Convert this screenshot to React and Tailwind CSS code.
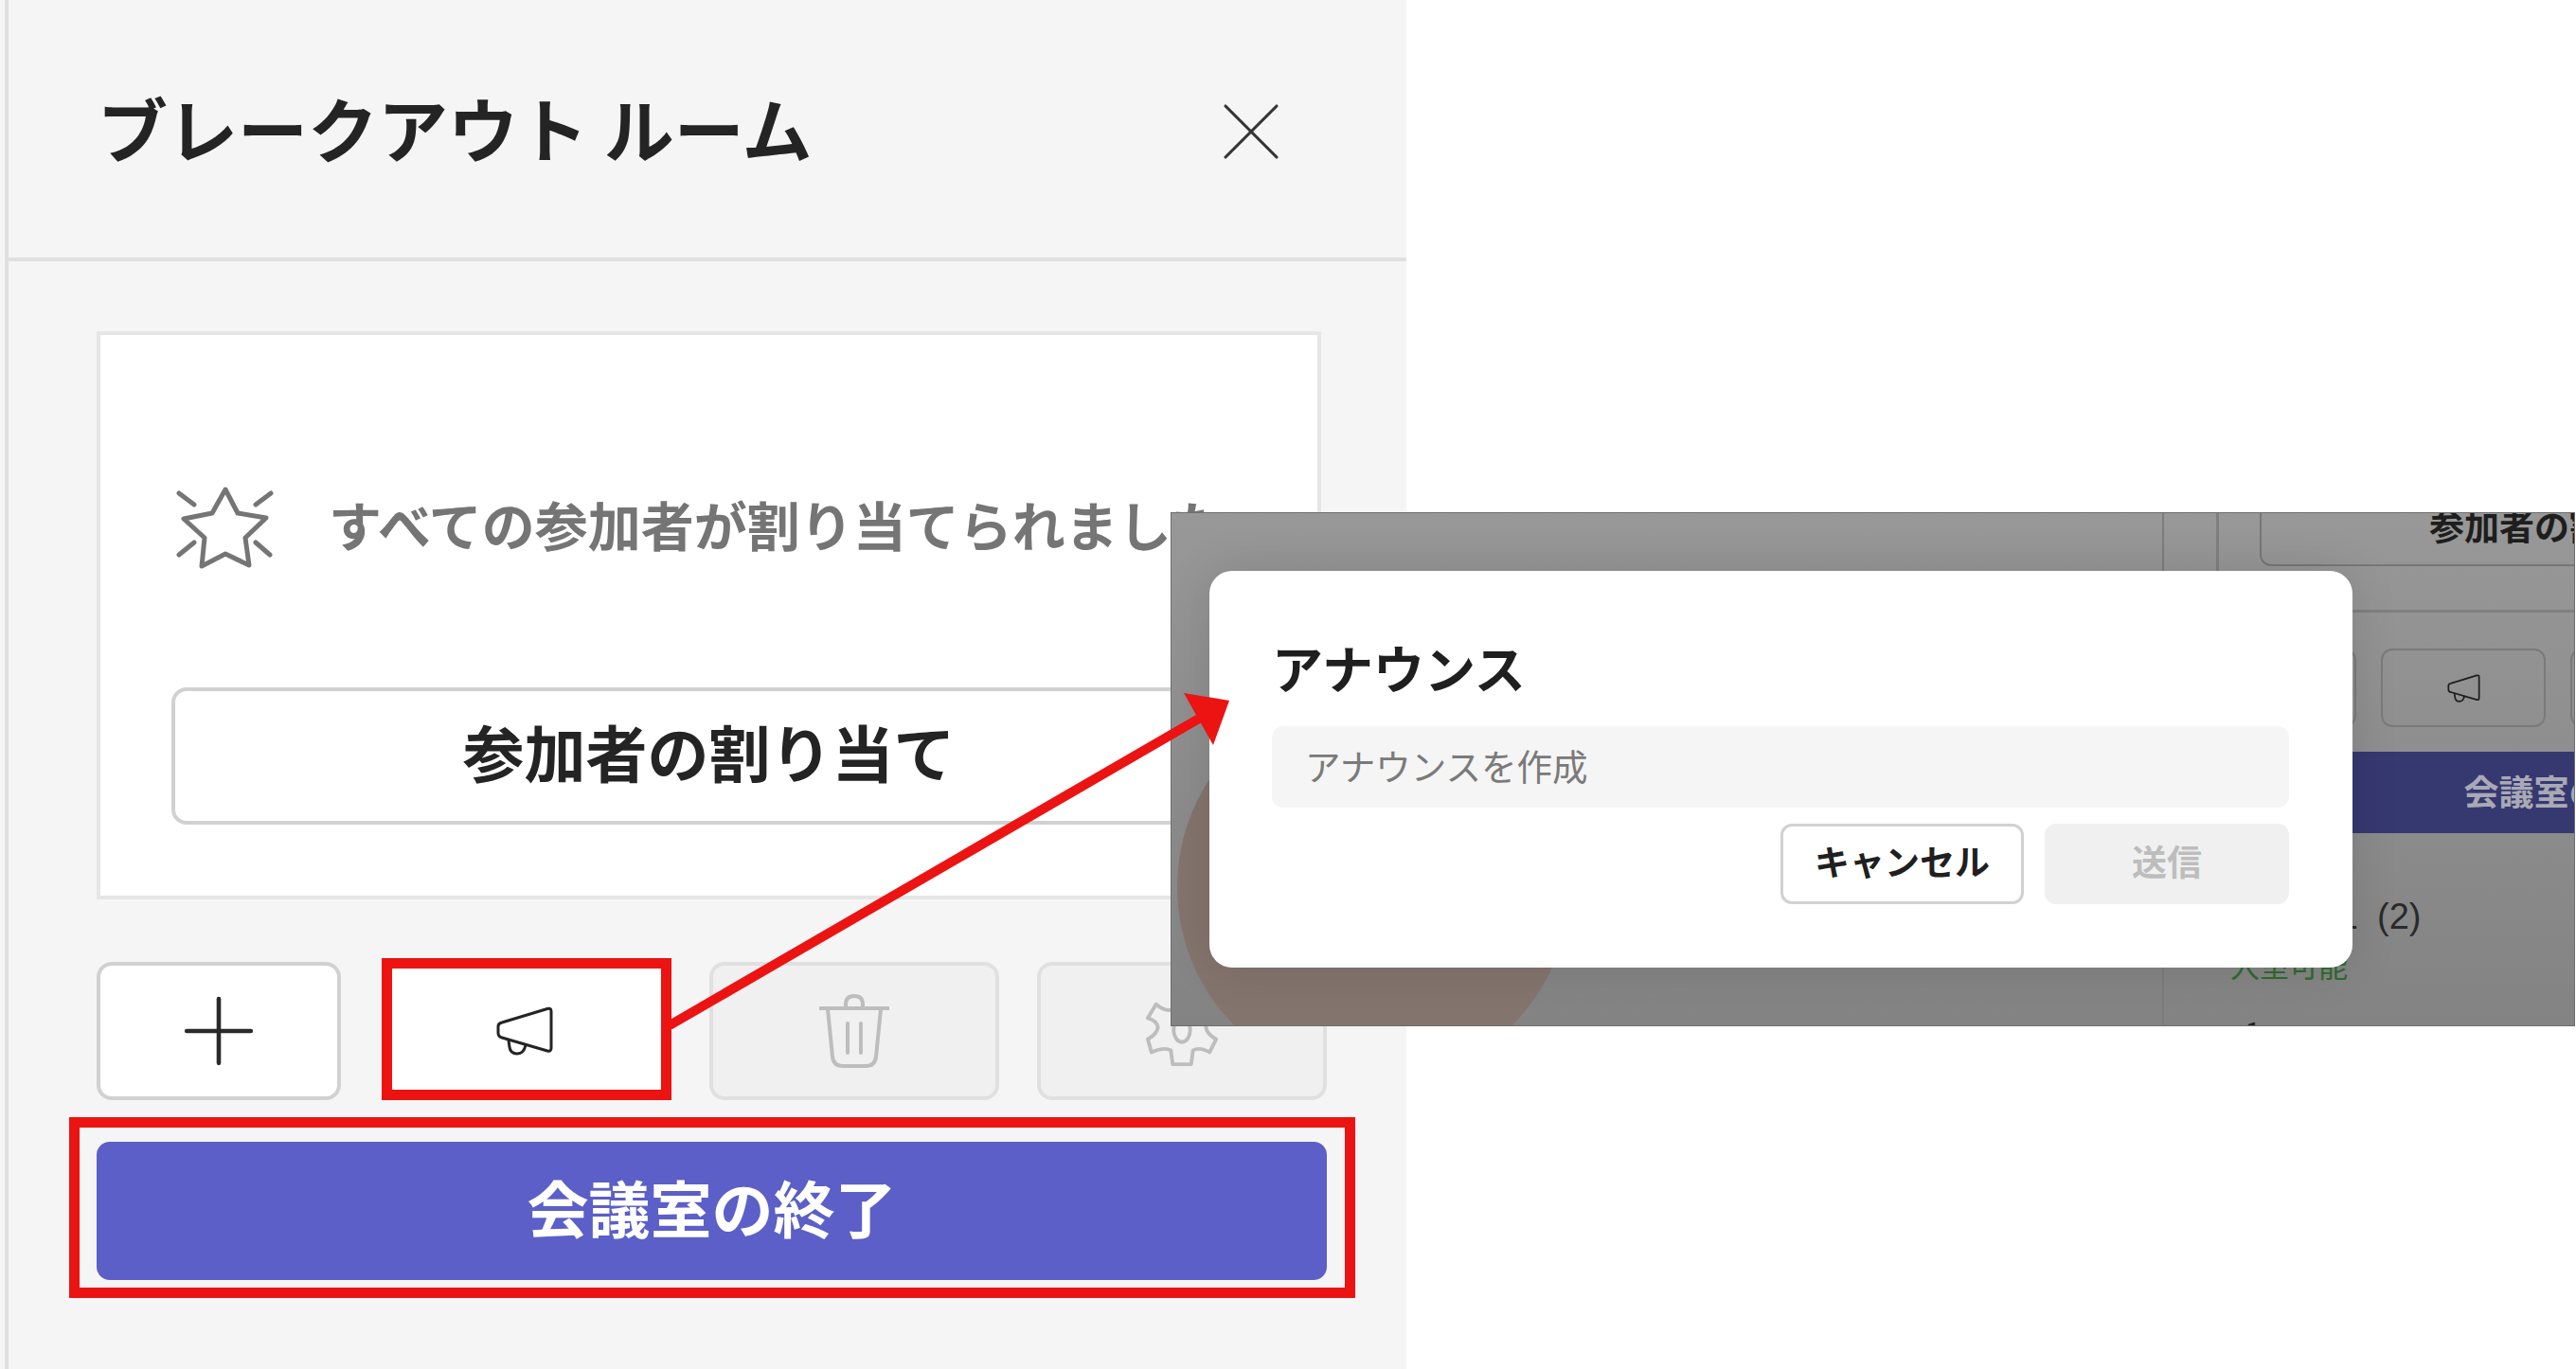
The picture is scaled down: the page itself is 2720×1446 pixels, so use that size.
import { X, Plus } from "lucide-react";

function Megaphone({ className }) {
  return (
    <svg viewBox="0 0 60 52" fill="none" stroke="currentColor" strokeWidth="3" strokeLinejoin="round" strokeLinecap="round" className={className}>
      <path d="M6 17 L54 2.5 Q58 1.5 58 5 L58 44 Q58 48 54 47 L6 33 Q2 32 2 28 L2 21 Q2 18 6 17 Z" />
      <path d="M13 36 L14 43 Q15 50 22 50 Q29 50 31 41" />
    </svg>
  );
}

function Trash({ className }) {
  return (
    <svg viewBox="0 0 74 78" fill="none" stroke="currentColor" strokeWidth="4" strokeLinecap="round" className={className}>
      <path d="M1 15 H73" />
      <path d="M28 14 V11 Q28 2 37 2 Q46 2 46 11 V14" />
      <path d="M9 16 L14 66 Q15 76 25 76 H49 Q59 76 60 66 L65 16" />
      <path d="M30 31 V62 M44 31 V62" />
    </svg>
  );
}

function Gear({ className }) {
  return (
    <svg viewBox="-2 -11 78 80" fill="none" stroke="currentColor" strokeWidth="4" strokeLinejoin="round" className={className}>
      <path d="M9 0 Q18 8 27 6 L27 -9 L47 -9 L47 6 Q56 8 65 0 L74 15 Q64 18 63 25 Q64 32 74 38 L67 52 Q56 46 49 50 L47 65 L27 65 L25 50 Q18 46 4 52 L0 38 Q10 32 11 25 Q10 18 0 15 Z" />
      <ellipse cx="37" cy="28" rx="9" ry="13" />
    </svg>
  );
}

function StarBurst({ className }) {
  return (
    <svg viewBox="20 20 112 95" fill="none" stroke="currentColor" strokeWidth="5" strokeLinecap="round" strokeLinejoin="round" className={className}>
      <path d="M77 27 L90 52 L120 57 L98 78 L102 107 L77 95 L52 108 L55 78 L33 58 L63 52 Z" />
      <path d="M28 31 L44 43 M125 31 L109 43 M28 96 L44 83 M124 96 L109 83" />
    </svg>
  );
}

// the dimmed panel behind the dialog, same structure as the big one at a smaller size
function DimmedPanel() {
  return (
    <div className="ml-[1046px] w-[860px] shrink-0 border-l-2 border-[#7c7c7c] pl-[55px]">
      <div className="w-[745px] h-[145px] -mt-[40px] border-[3px] border-[#7f7f7f] pl-[43px] pt-[17px]">
        <div className="w-[654px] h-[76px] border-2 border-[#777] rounded-[12px] flex items-center justify-center pb-[8px] text-[37px] font-bold text-[#1e1e1e] whitespace-nowrap">参加者の割り当て</div>
      </div>
      <div className="flex gap-[26px] mt-[38px]">
        <div className="w-[148px] h-[83px] border-2 border-[#7a7a7a] rounded-[12px]" />
        <div className="w-[174px] h-[83px] border-2 border-[#7a7a7a] rounded-[12px] flex items-center justify-center text-[#1e1e1e]">
          <Megaphone className="w-[35px] h-[30px]" />
        </div>
        <div className="w-[174px] h-[83px] border-2 border-[#7a7a7a] rounded-[12px]" />
      </div>
      <div className="w-[745px] h-[86px] mt-[26px] bg-[#363870] flex items-center justify-center pb-[2px] text-[37px] font-bold text-[#a9a9b5] whitespace-nowrap">会議室の終了</div>
      <div className="flex gap-[20px] mt-[64px] text-[38px] leading-[48px] text-[#2a2a2a] font-['Liberation_Sans','Noto_Sans_CJK_JP',sans-serif]">
        <span className="w-[150px] text-right whitespace-nowrap">ルーム 1</span>
        <span>(2)</span>
      </div>
      <div className="pl-[15px] mt-[5px] text-[31px] leading-[44px] text-[#2f6b2f] whitespace-nowrap">入室可能</div>
      <div className="pl-[30px] mt-[26px] text-[32px] leading-[44px] text-[#222]">1</div>
    </div>
  );
}

function AnnouncementShot() {
  return (
    <div className="absolute left-[1236px] top-[541px] w-[1483px] h-[543px] border border-[#6e6e6e] bg-gradient-to-b from-[#989898] to-[#838383] overflow-hidden flex">
      <div className="absolute left-[6px] top-[188px] w-[414px] h-[414px] rounded-full bg-[#84746e]" />
      <DimmedPanel />

      <div className="absolute left-[40px] top-[61px] w-[1207px] h-[419px] bg-white rounded-[24px] shadow-[0_0_50px_rgba(0,0,0,0.12)] pl-[66px] pt-[72px]">
        <div className="h-[60px] text-[54px] leading-[60px] font-bold text-[#1f1f1f]">アナウンス</div>
        <input
          readOnly
          placeholder="アナウンスを作成"
          className="block mt-[32px] w-[1074px] h-[86px] rounded-[12px] bg-[#f5f5f5] pl-[35px] pb-[6px] text-[37.5px] outline-none placeholder:text-[#7a7a7a]"
        />
        <div className="flex justify-end gap-[22px] w-[1074px] mt-[17px]">
          <button className="w-[257px] h-[85px] rounded-[12px] border-[3px] border-[#d1d1d1] bg-white pb-[5px] text-[37px] font-bold text-[#1f1f1f]">キャンセル</button>
          <button className="w-[258px] h-[85px] rounded-[12px] bg-[#f0f0f0] pb-[5px] text-[37px] font-bold text-[#bdbdbd]">送信</button>
        </div>
      </div>
    </div>
  );
}

export default function App() {
  return (
    <div className="relative w-[2720px] h-[1446px] bg-white overflow-hidden font-['Noto_Sans_CJK_JP','Liberation_Sans',sans-serif]">
      <div className="w-[1485px] h-[1446px] bg-[#f5f5f5] pl-[5px]">
        <div className="h-full border-l-4 border-[#e0e0e0]">
          <div className="h-[276px] border-b-4 border-[#e0e0e0] flex items-center justify-between pl-[94px] pr-[110px]">
            <h1 className="text-[74px] leading-none font-bold text-[#242424] whitespace-nowrap pb-[4px]">ブレークアウト ルーム</h1>
            <X className="w-[108px] h-[108px] text-[#333] mt-[6px]" strokeWidth={0.7} />
          </div>

          <div className="pl-[93px] pt-[74px]">
            <div className="w-[1293px] h-[600px] bg-white border-4 border-[#e6e6e6] pl-[75px] pt-[156px]">
              <div className="flex items-center gap-[54px] whitespace-nowrap text-[#757575]">
                <StarBurst className="w-[112px] h-[95px] shrink-0" />
                <span className="text-[56px] leading-none font-bold mb-[10px]">すべての参加者が割り当てられました</span>
              </div>
              <button className="mt-[121px] w-[1135px] h-[145px] rounded-[16px] border-4 border-[#d1d1d1] bg-white pb-[9px] text-[65px] font-bold text-[#242424]">参加者の割り当て</button>
            </div>

            <div className="flex gap-[40px] mt-[66px] w-[1299px]">
              <button className="w-[258px] h-[146px] mr-[3px] rounded-[16px] border-4 border-[#d1d1d1] bg-white flex items-center justify-center text-[#2a2a2a]">
                <Plus className="w-[116px] h-[116px]" strokeWidth={0.95} />
              </button>
              <button className="w-[306px] h-[146px] bg-white flex items-center justify-center pr-[4px] text-[#242424]">
                <Megaphone className="w-[60px] h-[52px]" />
              </button>
              <button className="w-[306px] h-[146px] rounded-[16px] border-4 border-[#e0e0e0] bg-[#f0f0f0] flex items-center justify-center text-[#bdbdbd]">
                <Trash className="w-[74px] h-[78px]" />
              </button>
              <button className="w-[306px] h-[146px] rounded-[16px] border-4 border-[#e0e0e0] bg-[#f0f0f0] flex items-center justify-center text-[#bdbdbd]">
                <Gear className="w-[76px] h-[78px]" />
              </button>
            </div>

            <button className="block mt-[44px] w-[1299px] h-[146px] rounded-[14px] bg-[#5b5fc7] pb-[9px] text-[65px] font-bold text-white">会議室の終了</button>
          </div>
        </div>
      </div>

      <AnnouncementShot />

      {/* red annotations over the screenshots */}
      <div className="absolute left-[403px] top-[1012px] w-[306px] h-[150px] border-[11px] border-[#ec1313]" />
      <div className="absolute left-[73px] top-[1180px] w-[1358px] h-[191px] border-[11px] border-[#ec1313]" />
      <svg className="absolute left-0 top-0 w-[2720px] h-[1446px] pointer-events-none" viewBox="0 0 2720 1446">
        <path d="M707 1083 L1266 759" stroke="#ec1313" strokeWidth="10" />
        <polygon points="1250,732 1298,740 1281,787" fill="#ec1313" />
      </svg>
    </div>
  );
}
